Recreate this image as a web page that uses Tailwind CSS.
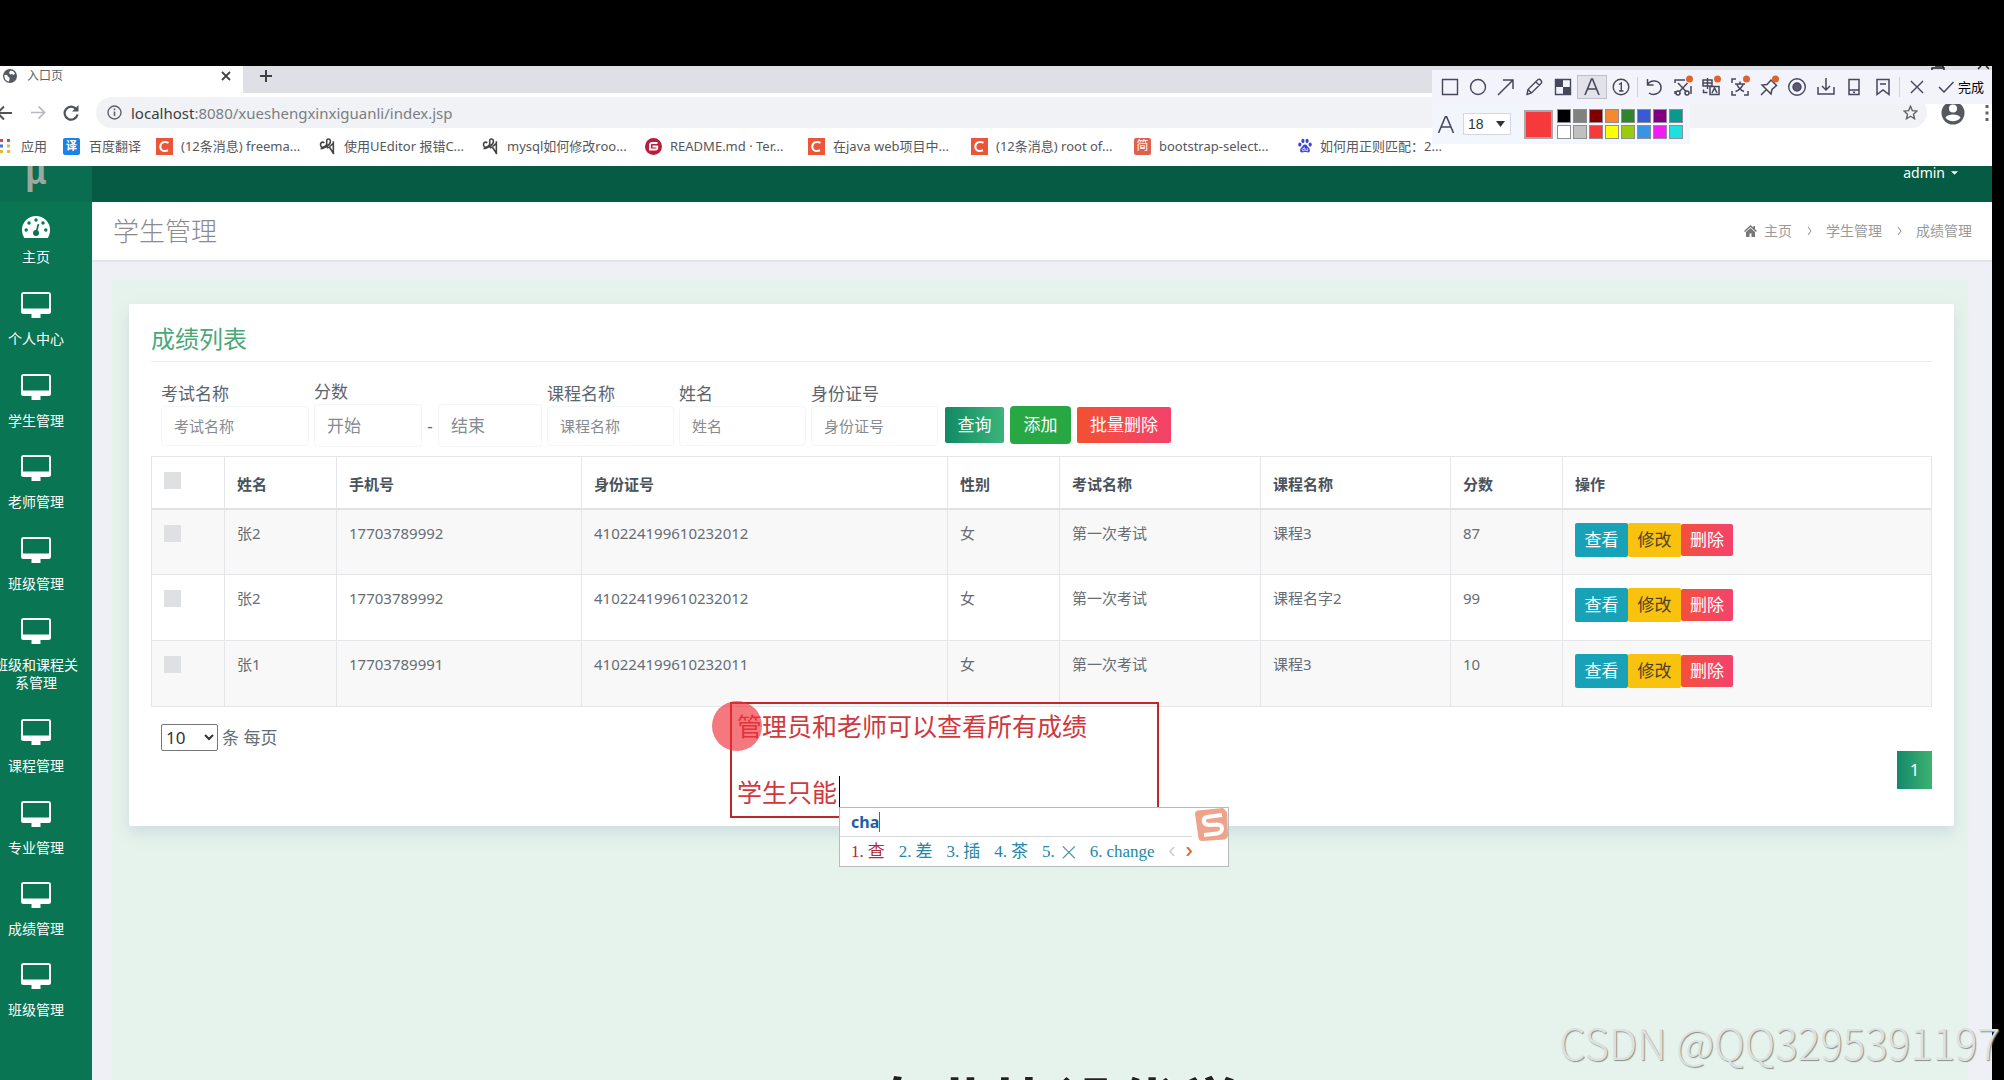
<!DOCTYPE html>
<html lang="zh-CN">
<head>
<meta charset="utf-8">
<title>入口页</title>
<script src="https://cdn.jsdelivr.net/npm/@tailwindcss/browser@4"></script>
</head>
<body class="bg-black">
<svg class="hidden">
  <symbol id="monitor" viewBox="0 0 30 26"><path fill="currentColor" fill-rule="evenodd" d="M2.500 0h25A2.500 2.500 0 0 1 30 2.500v17a2.500 2.500 0 0 1-2.500 2.500H19.500v4h-9v-4H2.500A2.500 2.500 0 0 1 0 19.500v-17A2.500 2.500 0 0 1 2.500 0zM2 2v14.500h26V2z"/></symbol>
  <symbol id="csdn" viewBox="0 0 17 17"><path fill="#ea5637" d="M0 0h17v17H0z"/><path d="M12.500 4.800C8.500 2.800 4.500 4.500 4.300 8.600c-.1 4 3.700 5.300 7.700 3.700" fill="none" stroke="#fff" stroke-width="2"/></symbol>
  <symbol id="editor" viewBox="0 0 16 16"><path d="M5 4.500C3 3 1 4.500 1.500 7c.8 2.500 4 2 5.500-.5C8 4 6 1.500 8.500 1s3 3 1 5c-1.500 1.500-4 3.500-8 4M13.500 3v12M7.500 9.500c2-1.500 3-.5 3.500 1l3 4.500M13.500 5L10 8" fill="none" stroke="#444" stroke-width="1.500"/></symbol>
</svg>
<div class="relative flex h-screen w-full flex-col overflow-hidden bg-black pt-[66px] pr-3 font-['Noto_Sans','Noto_Sans_CJK_SC',sans-serif]">

  <!-- Browser window -->
  <header class="shrink-0 bg-white text-[#5f6368]">
    <div class="flex h-[27px] bg-[#dfe0e5]">
      <div class="flex w-[243px] items-center bg-white pb-2 pl-[3px] pr-3">
        <svg class="size-[14px]" viewBox="0 0 14 14"><circle cx="7" cy="7" r="7" fill="#555a60"/><path d="M1.500 6c2-.5 3 .5 3.500 1.500s2 .5 1.500 2.500L6 12.500C3 12 1 9.500 1.500 6zM7 2c2-.8 4 .5 5 2.500L10.500 6 9 5 7.500 5.500 6 4z" fill="#fff"/></svg>
        <span class="ml-[10px] text-xs leading-4">入口页</span>
        <button class="ml-auto" aria-label="关闭标签页"><svg class="size-[10px]" viewBox="0 0 10 10"><path d="M1 1l8 8M9 1l-8 8" stroke="#444" stroke-width="1.800"/></svg></button>
      </div>
      <div class="flex flex-1 items-center rounded-bl-lg bg-[#dfe0e5] pb-2 pl-[17px]">
        <button aria-label="新标签页"><svg class="size-3" viewBox="0 0 12 12"><path d="M6 0v12M0 6h12" stroke="#3c4043" stroke-width="2"/></svg></button>
      </div>
    </div>
    <div class="flex h-[39px] items-center">
      <button class="-ml-1" aria-label="后退"><svg class="size-4" viewBox="0 0 16 16"><path d="M16 8H2M8 1.500L1.500 8 8 14.500" fill="none" stroke="#505458" stroke-width="2"/></svg></button>
      <button class="ml-[19px]" aria-label="前进"><svg class="size-[15px]" viewBox="0 0 16 16"><path d="M0 8h14M8 1.500L14.500 8 8 14.500" fill="none" stroke="#b8babd" stroke-width="1.800"/></svg></button>
      <button class="ml-[17px]" aria-label="刷新"><svg class="size-4" viewBox="0 0 16 16"><path d="M13.500 4.500A6.500 6.500 0 1 0 14.500 9.500" fill="none" stroke="#505458" stroke-width="2.200"/><path d="M15.500 0v6.500H9z" fill="#505458"/></svg></button>
      <div class="ml-[17px] mr-[65px] flex h-[31px] flex-1 items-center rounded-full bg-[#f1f2f6] pl-[11px] pr-[9px]">
        <svg class="size-[15px]" viewBox="0 0 15 15"><circle cx="7.500" cy="7.500" r="6.500" fill="none" stroke="#5f6368" stroke-width="1.400"/><path d="M7.500 6.500V11M7.500 3.500v1.700" stroke="#5f6368" stroke-width="1.600"/></svg>
        <span class="ml-[9px] text-[15px] leading-5 text-[#7b7e82]"><span class="text-[#3a3d40]">localhost</span>:8080/xueshengxinxiguanli/index.jsp</span>
        <svg class="ml-auto size-[15px]" viewBox="0 0 24 24"><path d="M12 2l3 7 7.500.6-5.700 5 1.700 7.400L12 18l-6.500 4 1.700-7.400-5.700-5L9 9z" fill="none" stroke="#5f6368" stroke-width="2.200"/></svg>
      </div>
    </div>
    <nav class="flex h-[34px] items-center pb-1.5 text-[13px] leading-5 text-[#55585c]">
      <a href="#" class="flex w-[63px] items-center"><svg class="mr-[9px] h-[14px] w-3" viewBox="0 0 12 14"><path fill="#d9483b" d="M0 0h3v3H0zM7 0h3v3H7z"/><path fill="#4a72d8" d="M0 5.500h3v3H0z"/><path fill="#e2b93b" d="M7 5.500h3v3H7zM0 11h3v3H0zM7 11h3v3H7z"/></svg>应用</a>
      <a href="#" class="flex w-[93px] items-center"><span class="mr-[9px] flex size-[17px] items-center justify-center rounded-xs bg-[#1d82e6] text-[11px] font-bold leading-4 text-white">译</span>百度翻译</a>
      <a href="#" class="flex w-[163px] items-center whitespace-nowrap"><svg class="mr-2 size-[17px]"><use href="#csdn"/></svg>(12条消息) freema...</a>
      <a href="#" class="flex w-[163px] items-center whitespace-nowrap"><svg class="mr-2 size-[17px]"><use href="#editor"/></svg>使用UEditor 报错C...</a>
      <a href="#" class="flex w-[163px] items-center whitespace-nowrap"><svg class="mr-2 size-[17px]"><use href="#editor"/></svg>mysql如何修改roo...</a>
      <a href="#" class="flex w-[163px] items-center whitespace-nowrap"><svg class="mr-2 size-[17px]" viewBox="0 0 17 17"><circle cx="8.500" cy="8.500" r="8.500" fill="#b91d3c"/><path d="M12.500 5H7C5.500 5 5 6 5 7v4.500h5.500c1.200 0 1.800-.8 1.800-1.800V8.500H7.500" fill="none" stroke="#fff" stroke-width="1.800"/></svg>README.md · Ter...</a>
      <a href="#" class="flex w-[163px] items-center whitespace-nowrap"><svg class="mr-2 size-[17px]"><use href="#csdn"/></svg>在java web项目中...</a>
      <a href="#" class="flex w-[163px] items-center whitespace-nowrap"><svg class="mr-2 size-[17px]"><use href="#csdn"/></svg>(12条消息) root of...</a>
      <a href="#" class="flex w-[163px] items-center whitespace-nowrap"><span class="mr-2 flex size-[17px] items-center justify-center rounded-xs bg-[#e0614f] text-[12px] leading-4 text-white">简</span>bootstrap-select...</a>
      <a href="#" class="flex w-[163px] items-center whitespace-nowrap"><svg class="mr-[7px] size-4" viewBox="0 0 17 17"><g fill="#3a45d2"><ellipse cx="3" cy="7" rx="1.700" ry="2.300"/><ellipse cx="6.300" cy="3.200" rx="1.700" ry="2.300"/><ellipse cx="10.700" cy="3.200" rx="1.700" ry="2.300"/><ellipse cx="14" cy="7" rx="1.700" ry="2.300"/><path d="M8.500 6.800c2 0 2.500 2 4 3.500s1.800 5-.8 5c-1.500 0-2-.3-3.200-.3s-1.700.3-3.200.3c-2.600 0-2.300-3.500-.8-5s2-3.500 4-3.500z"/></g><path d="M7.700 9.500v4h-1.200c-1.300 0-1.300-2.300 0-2.300h1M9.300 11v2.500h2V11" fill="none" stroke="#fff" stroke-width=".8"/></svg>如何用正则匹配：2...</a>
    </nav>
  </header>

  <!-- Web application -->
  <div class="flex min-h-0 flex-1">
    <aside class="w-[92px] shrink-0 overflow-hidden bg-[#0a7552] text-white">
      <div class="-ml-5 flex h-9 w-28 justify-center bg-[#0a6d4f]">
        <span class="-mt-2 text-[32px] font-bold leading-7 text-[#9aa9a2]">μ</span>
      </div>
      <ul class="-ml-5 w-28 text-center text-sm leading-[18px]">
        <li class="h-[90px] pt-[14px]"><a href="#" class="flex flex-col items-center gap-[10px]"><svg class="h-[22px] w-7" viewBox="0 0 28 22"><path fill="#fff" d="M14 0a14 14 0 0 1 14 14c0 3-.8 5.700-2.200 8H2.200A15 15 0 0 1 0 14 14 14 0 0 1 14 0z"/><g fill="#0a7552"><circle cx="14" cy="4" r="1.700"/><circle cx="7" cy="7" r="1.700"/><circle cx="21" cy="7" r="1.700"/><circle cx="4.200" cy="14" r="1.700"/><circle cx="23.800" cy="14" r="1.700"/><circle cx="14" cy="17" r="3"/></g><path d="M14 17l2.500-9" stroke="#0a7552" stroke-width="1.600"/></svg>主页</a></li>
        <li class="h-[82px]"><a href="#" class="flex flex-col items-center gap-3"><svg class="h-[26px] w-[30px]"><use href="#monitor"/></svg>个人中心</a></li>
        <li class="h-[81px]"><a href="#" class="flex flex-col items-center gap-3"><svg class="h-[26px] w-[30px]"><use href="#monitor"/></svg>学生管理</a></li>
        <li class="h-[82px]"><a href="#" class="flex flex-col items-center gap-3"><svg class="h-[26px] w-[30px]"><use href="#monitor"/></svg>老师管理</a></li>
        <li class="h-[81px]"><a href="#" class="flex flex-col items-center gap-3"><svg class="h-[26px] w-[30px]"><use href="#monitor"/></svg>班级管理</a></li>
        <li class="h-[101px]"><a href="#" class="flex flex-col items-center gap-3"><svg class="h-[26px] w-[30px]"><use href="#monitor"/></svg><span>班级和课程关<br>系管理</span></a></li>
        <li class="h-[82px]"><a href="#" class="flex flex-col items-center gap-3"><svg class="h-[26px] w-[30px]"><use href="#monitor"/></svg>课程管理</a></li>
        <li class="h-[81px]"><a href="#" class="flex flex-col items-center gap-3"><svg class="h-[26px] w-[30px]"><use href="#monitor"/></svg>专业管理</a></li>
        <li class="h-[81px]"><a href="#" class="flex flex-col items-center gap-3"><svg class="h-[26px] w-[30px]"><use href="#monitor"/></svg>成绩管理</a></li>
        <li class="h-[82px]"><a href="#" class="flex flex-col items-center gap-3"><svg class="h-[26px] w-[30px]"><use href="#monitor"/></svg>班级管理</a></li>
      </ul>
    </aside>

    <div class="flex min-w-0 flex-1 flex-col">
      <div class="flex h-9 shrink-0 justify-end bg-[#055b43] pr-[34px]">
        <button class="flex h-[14px] items-center gap-1.5 text-sm leading-4 text-white">admin<svg class="h-1 w-[7px]" viewBox="0 0 8 4"><path d="M0 0h8L4 4z" fill="#fff"/></svg></button>
      </div>
      <div class="flex h-[60px] shrink-0 items-center justify-between border-b-2 border-[#e3e4e9] bg-white pl-[21px] pr-5">
        <h1 class="text-[26px] font-light leading-8 text-[#8c8c8c]">学生管理</h1>
        <ol class="flex items-center text-sm leading-5 text-[#999]">
          <li><a href="#" class="flex items-center gap-[7px]"><svg class="h-3 w-[13px]" viewBox="0 0 13 12"><path d="M6.500 0L0 6l1 1 5.500-5L12 7l1-1-2-2V1H9.500v1.500zM2 7v5h3.500V8.500h2V12H11V7L6.500 3z" fill="#777"/></svg>主页</a></li>
          <li class="w-[34px] text-center"><svg class="mx-auto h-2 w-[5px]" viewBox="0 0 5 8"><path d="M1 0l3 4-3 4" fill="none" stroke="#888"/></svg></li>
          <li><a href="#">学生管理</a></li>
          <li class="w-[34px] text-center"><svg class="mx-auto h-2 w-[5px]" viewBox="0 0 5 8"><path d="M1 0l3 4-3 4" fill="none" stroke="#888"/></svg></li>
          <li>成绩管理</li>
        </ol>
      </div>

      <main class="flex min-h-0 flex-1 bg-[#eff0f5] pl-5 pr-6 pt-[18px]">
        <div class="min-w-0 flex-1 bg-[#e6f3ec] px-[17px] pr-[14px] pt-6">
          <section class="rounded-xs bg-white px-[22px] pb-[37px] pt-[21px] shadow-[0_7px_15px_rgba(160,180,200,0.35)]">
            <h2 class="text-2xl leading-7 text-[#4aa877]">成绩列表</h2>
            <hr class="mt-2 border-[#ececee]">
            <form class="mt-[18px] flex items-end gap-[5px] pl-[10px] text-[17px] leading-6 text-[#5c646c]">
              <div class="mb-px flex flex-col"><label for="exam">考试名称</label><input id="exam" placeholder="考试名称" class="h-10 w-[148px] rounded-sm border border-[#f4f5f6] px-3 text-[15px] placeholder:text-[#858b91]"></div>
              <div class="flex flex-col"><label for="score-from">分数</label>
                <div class="flex items-center"><input id="score-from" placeholder="开始" class="h-[43px] w-[108px] rounded-sm border border-[#f4f5f6] px-3 placeholder:text-[#858b91]"><span class="w-4 text-center">-</span><input aria-label="分数结束" placeholder="结束" class="h-[43px] w-[104px] rounded-sm border border-[#f4f5f6] px-3 placeholder:text-[#858b91]"></div></div>
              <div class="mb-px flex flex-col"><label for="course">课程名称</label><input id="course" placeholder="课程名称" class="h-10 w-[127px] rounded-sm border border-[#f4f5f6] px-3 text-[15px] placeholder:text-[#858b91]"></div>
              <div class="mb-px flex flex-col"><label for="name">姓名</label><input id="name" placeholder="姓名" class="h-10 w-[127px] rounded-sm border border-[#f4f5f6] px-3 text-[15px] placeholder:text-[#858b91]"></div>
              <div class="mb-px flex flex-col"><label for="idno">身份证号</label><input id="idno" placeholder="身份证号" class="h-10 w-[127px] rounded-sm border border-[#f4f5f6] px-3 text-[15px] placeholder:text-[#858b91]"></div>
              <div class="mb-[3px] ml-0.5 flex items-center gap-1.5 text-white">
                <button type="button" class="h-9 w-[59px] rounded-xs bg-linear-to-r from-[#0f8a65] to-[#3ab57b]">查询</button>
                <button type="button" class="h-[38px] w-[61px] rounded-sm bg-[#28a745]">添加</button>
                <button type="button" class="h-9 w-[94px] rounded-xs bg-linear-to-r from-[#f3502f] to-[#f3426a]">批量删除</button>
              </div>
            </form>

            <table class="mt-[9px] w-full table-fixed border-collapse text-left text-[15px] leading-[22px] text-[#666d74] [&_td]:border [&_td]:border-[#e4e6e9] [&_td]:px-3 [&_td]:pt-3 [&_td]:align-top [&_th]:border [&_th]:border-[#e4e6e9] [&_th]:px-3 [&_th]:pt-1">
              <colgroup><col class="w-[73px]"><col class="w-[112px]"><col class="w-[245px]"><col class="w-[366px]"><col class="w-[112px]"><col class="w-[201px]"><col class="w-[190px]"><col class="w-[112px]"><col></colgroup>
              <thead>
                <tr class="h-[52px] border-b-2 border-[#e0e2e5] text-[#4a525a] [&_th]:font-bold">
                  <th><input type="checkbox" aria-label="全选" class="mb-2 block size-[17px] appearance-none bg-[#dfe0e2]"></th><th>姓名</th><th>手机号</th><th>身份证号</th><th>性别</th><th>考试名称</th><th>课程名称</th><th>分数</th><th>操作</th>
                </tr>
              </thead>
              <tbody>
                <tr class="h-[66px] bg-[#f8f8f9]">
                  <td><input type="checkbox" aria-label="选择" class="mt-[3px] block size-[17px] appearance-none bg-[#dfe0e4]"></td><td>张2</td><td>17703789992</td><td>410224199610232012</td><td>女</td><td>第一次考试</td><td>课程3</td><td>87</td>
                  <td><div class="mt-px flex items-center text-[17px] leading-6 text-white"><button class="h-[34px] w-[53px] rounded-xs bg-[#17a2b8]">查看</button><button class="h-[34px] w-[53px] rounded-xs bg-[#f8c20e] text-[#4d4427]">修改</button><button class="h-8 w-[52px] rounded-xs bg-linear-to-r from-[#f3503a] to-[#f5416c]">删除</button></div></td>
                </tr>
                <tr class="h-[66px] bg-white">
                  <td><input type="checkbox" aria-label="选择" class="mt-[3px] block size-[17px] appearance-none bg-[#dfe0e4]"></td><td>张2</td><td>17703789992</td><td>410224199610232012</td><td>女</td><td>第一次考试</td><td>课程名字2</td><td>99</td>
                  <td><div class="mt-px flex items-center text-[17px] leading-6 text-white"><button class="h-[34px] w-[53px] rounded-xs bg-[#17a2b8]">查看</button><button class="h-[34px] w-[53px] rounded-xs bg-[#f8c20e] text-[#4d4427]">修改</button><button class="h-8 w-[52px] rounded-xs bg-linear-to-r from-[#f3503a] to-[#f5416c]">删除</button></div></td>
                </tr>
                <tr class="h-[66px] bg-[#f8f8f9]">
                  <td><input type="checkbox" aria-label="选择" class="mt-[3px] block size-[17px] appearance-none bg-[#dfe0e4]"></td><td>张1</td><td>17703789991</td><td>410224199610232011</td><td>女</td><td>第一次考试</td><td>课程3</td><td>10</td>
                  <td><div class="mt-px flex items-center text-[17px] leading-6 text-white"><button class="h-[34px] w-[53px] rounded-xs bg-[#17a2b8]">查看</button><button class="h-[34px] w-[53px] rounded-xs bg-[#f8c20e] text-[#4d4427]">修改</button><button class="h-8 w-[52px] rounded-xs bg-linear-to-r from-[#f3503a] to-[#f5416c]">删除</button></div></td>
                </tr>
              </tbody>
            </table>

            <div class="mt-[17px] flex items-center gap-1 pl-[10px] text-[17px] leading-6 text-[#666d74]">
              <select id="size" class="h-[27px] w-[57px] rounded-xs border border-[#767676] bg-white text-[17px] leading-6 text-[#333]"><option>10</option></select>
              <label for="size">条 每页</label>
            </div>
            <div class="flex justify-end"><button class="h-[38px] w-[35px] bg-linear-to-r from-[#12896a] to-[#3cb371] text-[17px] text-white">1</button></div>
          </section>
          <p class="mt-[244px] pl-7 text-center text-[62px] font-bold leading-[72px] whitespace-nowrap text-[#222] [text-shadow:0_0_3px_#fff]">专业毕设优学</p>
        </div>
      </main>
    </div>
  </div>

  <!-- Browser controls beside the capture bar -->
  <svg class="absolute right-[23px] top-[98px] h-9 w-[40px]" viewBox="0 0 40 36"><circle cx="12" cy="15" r="11.500" fill="#55585c"/><circle cx="12" cy="10.500" r="4" fill="#fff"/><path d="M4.500 19.500c2-4 13-4 15 0-3 5-12 5-15 0z" fill="#fff"/></svg>
  <svg class="absolute right-[15px] top-[105px] h-4 w-1" viewBox="0 0 4 16"><path d="M.5 0h3v3h-3zM.5 6.500h3v3h-3zM.5 13h3v3h-3z" fill="#5f6368"/></svg>
  <svg class="absolute right-[14px] top-[66px] h-1 w-[60px]" viewBox="0 0 60 4"><path d="M2 4V2h12v2M5 0h8v2" fill="none" stroke="#222" stroke-width="1.500"/><path d="M48 3l3-3M56 0l3 3" stroke="#222" stroke-width="1.500"/></svg>

  <!-- Capture toolbar -->
  <div class="absolute right-3 top-[70px] w-[560px] text-[#45475a]">
    <div class="flex h-[34px] items-center bg-[#f3f3fc] pl-1">
      <div class="flex w-[199px] [&_svg]:size-5 [&_svg]:fill-none [&_svg]:stroke-current [&>button]:flex [&>button]:h-6 [&>button]:flex-1 [&>button]:items-center [&>button]:justify-center">
        <button aria-label="矩形"><svg viewBox="0 0 20 20" stroke-width="1.400"><path d="M2.500 2.500h15v15h-15z"/></svg></button>
        <button aria-label="椭圆"><svg viewBox="0 0 20 20" stroke-width="1.400"><circle cx="10" cy="10" r="7.500"/></svg></button>
        <button aria-label="箭头"><svg viewBox="0 0 20 20" stroke-width="1.500"><path d="M2 18L17 3M7 3h10v9"/></svg></button>
        <button aria-label="画笔"><svg viewBox="0 0 20 20" stroke-width="1.400"><path d="M3 17.500l1-5L13.500 3q2-1.500 3.500.5t-.5 3.500L7.500 16zM12 5l3.500 3.500M4 12.500L7.500 16"/></svg></button>
        <button aria-label="马赛克"><svg viewBox="0 0 20 20" stroke-width="1.400"><path d="M2.500 2.500h15v15h-15z"/><path d="M3 3h7v7H3zM10 10h7v7h-7z" fill="#45475a" stroke="none"/></svg></button>
        <button aria-label="文字" class="border border-[#bfc0c8] bg-[#e2e3ea]"><svg viewBox="0 0 20 20" stroke-width="1.600"><path d="M3 18L9.500 2h1L17 18M5.500 12h9"/></svg></button>
        <button aria-label="序号"><svg viewBox="0 0 20 20" stroke-width="1.400"><circle cx="10" cy="10" r="7.800"/><path d="M8 7.500L10.300 6v8M8 14h4.500"/></svg></button>
      </div>
      <i class="mx-0.5 h-5 w-px bg-[#d0d1da]"></i>
      <div class="flex w-[257px] [&_svg]:size-5 [&_svg]:overflow-visible [&_svg]:fill-none [&_svg]:stroke-current [&>button]:flex [&>button]:h-6 [&>button]:flex-1 [&>button]:items-center [&>button]:justify-center">
        <button aria-label="撤销"><svg viewBox="0 0 20 20" stroke-width="1.500"><path d="M3.500 2v6h6M3.500 8C6 2 16.500 2.500 17 10.500 17 17 9 19 5 16"/></svg></button>
        <button aria-label="裁剪"><svg viewBox="0 0 20 20" stroke-width="1.500"><path d="M2 6V3h10M18 9v8M5 6l8.500 9M14.500 6L6 15M2 14v3"/><circle cx="5" cy="16" r="2"/><circle cx="14" cy="16" r="2"/><circle cx="16.500" cy="2" r="3.500" fill="#e0622f" stroke="none"/></svg></button>
        <button aria-label="翻译"><svg viewBox="0 0 20 20" stroke-width="1.500"><path d="M2 3h9v6H2zM6.500 1v11M2 6h9M9 9.500h9v8H9zM11 16l2.500-5 2.500 5M2.500 12.500v3h4"/><circle cx="16.500" cy="2" r="3.500" fill="#e0622f" stroke="none"/></svg></button>
        <button aria-label="识别文字"><svg viewBox="0 0 20 20" stroke-width="1.500"><path d="M2 6V2h4M2 14v4h4M14 18h4v-4M5 7h10M10 4.500V7M7 7.500q2 5 7 7M13 7.500q-2 5-7.500 7"/><circle cx="16.500" cy="2" r="3.500" fill="#e0622f" stroke="none"/></svg></button>
        <button aria-label="钉住"><svg viewBox="0 0 20 20" stroke-width="1.500"><path d="M2 18l5.500-5.500M3 8l9 9 1-4.500 4.500-4L12 3 8 7.500z"/><circle cx="16.500" cy="2" r="3.500" fill="#e0622f" stroke="none"/></svg></button>
        <button aria-label="录制"><svg viewBox="0 0 20 20" stroke-width="1.400"><circle cx="10" cy="10" r="8.300"/><circle cx="10" cy="10" r="4" fill="#5a5c70"/></svg></button>
        <button aria-label="下载"><svg viewBox="0 0 20 20" stroke-width="1.500"><path d="M2 10v7h16v-7M10 1v12M6 9l4 4 4-4"/></svg></button>
        <button aria-label="发送到手机"><svg viewBox="0 0 20 20" stroke-width="1.500"><path d="M5 2.500h10v15H5zM5 13h10M9 15.300h2"/></svg></button>
        <button aria-label="收藏"><svg viewBox="0 0 20 20" stroke-width="1.500"><path d="M4 2.500h12v15l-6-4.500-6 4.500zM7 7h6"/></svg></button>
      </div>
      <i class="mx-0.5 h-5 w-px bg-[#d0d1da]"></i>
      <button aria-label="取消" class="ml-2 mr-3.5"><svg class="size-[14px]" viewBox="0 0 15 15"><path d="M1 1l13 13M14 1L1 14" stroke="currentColor" stroke-width="1.500"/></svg></button>
      <button class="flex items-center gap-1 text-[13px] leading-4 text-black"><svg class="h-3 w-4" viewBox="0 0 16 12"><path d="M1 6l5 5L15.500 1" fill="none" stroke="#45475a" stroke-width="1.500"/></svg>完成</button>
    </div>
    <div class="flex h-10 w-[258px] items-center bg-[#f3f5fd]/90 pl-1.5">
      <svg class="h-[17px] w-4" viewBox="0 0 16 17"><path d="M.5 17L7.500.5h1l7 16.500M3 11h10" fill="none" stroke="currentColor" stroke-width="1.600"/></svg>
      <div class="relative ml-[9px]">
        <select aria-label="字号" class="block h-[22px] w-12 appearance-none border border-[#d5d6de] bg-white pl-1 font-['Liberation_Sans',sans-serif] text-sm leading-4 text-[#333]"><option>18</option></select>
        <svg class="pointer-events-none absolute right-1.5 top-2 h-[6px] w-[9px]" viewBox="0 0 9 6"><path d="M0 0h9L4.500 6z" fill="#333"/></svg>
      </div>
      <span class="ml-[13px] size-[29px] border-2 border-[#a9a9ad] bg-[#f6393b]"></span>
      <div class="ml-1 grid grid-cols-8 gap-0.5 [&>i]:size-[14px] [&>i]:border [&>i]:border-[#8e8e93]">
        <i class="bg-black"></i><i class="bg-[#808080]"></i><i class="bg-[#800000]"></i><i class="bg-[#f7882f]"></i><i class="bg-[#308430]"></i><i class="bg-[#385ad3]"></i><i class="bg-[#800080]"></i><i class="bg-[#09998f]"></i>
        <i class="bg-white"></i><i class="bg-[#c0c0c0]"></i><i class="bg-[#f6393b]"></i><i class="bg-[#ffff00]"></i><i class="bg-[#99cc0c]"></i><i class="bg-[#3894e4]"></i><i class="bg-[#f31bf3]"></i><i class="bg-[#1ee0de]"></i>
      </div>
    </div>
  </div>

  <!-- Annotation drawn over the page -->
  <div class="absolute left-[730px] top-[702px] h-[116px] w-[429px] border-2 border-[#c0272d] pl-[5px] text-[25px] leading-[66px] text-[#d0383c]">
    <p class="-mt-[11px] whitespace-nowrap">管理员和老师可以查看所有成绩</p>
    <p class="flex items-center whitespace-nowrap">学生只能<i class="ml-0.5 h-8 w-px bg-black"></i></p>
  </div>
  <i class="absolute left-[712px] top-[701px] size-[50px] rounded-full bg-[#ee3038]/65"></i>

  <!-- Input method window -->
  <div class="absolute left-[839px] top-[807px] h-[60px] w-[390px] border border-[#b5bcbc] bg-white">
    <div class="mr-9 flex h-[29px] items-center border-b border-[#d5d8da] pl-[11px] text-base font-bold leading-5 text-[#1b5fa8]">cha<i class="h-5 w-px bg-[#d03040]"></i></div>
    <ol class="flex h-[29px] items-center gap-[14px] whitespace-nowrap pl-[11px] font-['Liberation_Serif','Noto_Sans_CJK_SC',serif] text-[17px] leading-5 text-[#2388a8] [&>li]:flex [&>li]:gap-1">
      <li class="text-[#b22830]"><span>1.</span><span>查</span></li><li><span>2.</span><span>差</span></li><li><span>3.</span><span>插</span></li><li><span>4.</span><span>茶</span></li><li><span>5.</span><span class="w-[17px] text-center font-['Noto_Sans_CJK_SC',sans-serif] text-xl leading-5 font-light">×</span></li><li><span>6.</span><span>change</span></li>
      <li class="items-center"><svg class="h-[9px] w-6" viewBox="0 0 24 9"><path d="M5 0L1 4.500 5 9" fill="none" stroke="#ccc" stroke-width="1.500"/><path d="M18 0l4 4.500L18 9" fill="none" stroke="#e0702f" stroke-width="2"/></svg></li>
    </ol>
    <svg class="absolute right-0 top-0 size-[34px]" viewBox="0 0 34 34"><path d="M1 6Q1 3 4 2.500L29 0l4 4 1 24q-1 3-3 3.500L8 33q-3 0-3.500-3z" fill="#eda38c"/><path d="M28 7L13 9q-4 1-3 5 1 3 6 3l7-.5q5 0 5 4t-5 5L10 27" fill="none" stroke="#fff" stroke-width="4"/></svg>
  </div>

  <p class="absolute right-1 top-[1012px] whitespace-nowrap font-['Noto_Sans_CJK_SC',sans-serif] text-[42px] font-light leading-[60px] text-[#dde2e0] [text-shadow:1px_1px_1px_#8a8f8d]">CSDN @QQ3295391197</p>
</div>
</body>
</html>
